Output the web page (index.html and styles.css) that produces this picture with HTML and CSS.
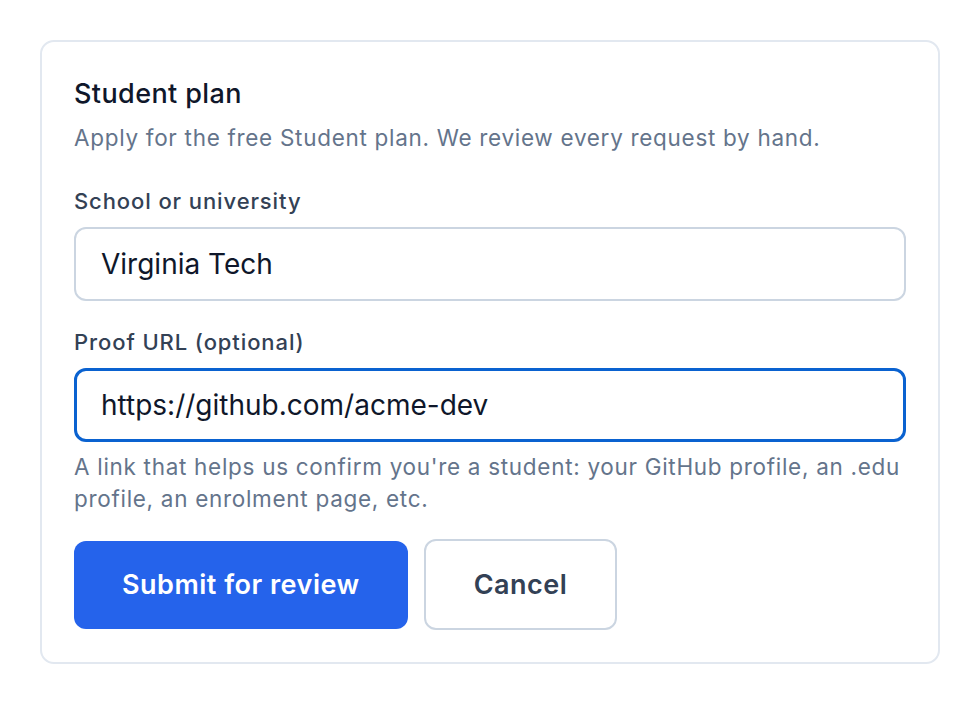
FILE: index.html
```html
<!DOCTYPE html>
<html lang="en">
<head>
<meta charset="utf-8">
<title>Student plan</title>
<link rel="stylesheet" href="styles.css">
</head>
<body>
<section class="card">
  <h2 class="title">Student plan</h2>
  <p class="subtitle">Apply for the free Student plan. We review every request by hand.</p>
  <form class="form">
    <div class="field">
      <label class="label" for="school">School or university</label>
      <input class="input" id="school" type="text" value="Virginia Tech">
    </div>
    <div class="field">
      <label class="label" for="proof">Proof URL (optional)</label>
      <input class="input input-focus" id="proof" type="text" value="https://github.com/acme-dev">
      <p class="help">A link that helps us confirm you're a student: your GitHub profile, an .edu profile, an enrolment page, etc.</p>
    </div>
    <div class="actions">
      <button type="button" class="btn btn-primary">Submit for review</button>
      <button type="button" class="btn btn-secondary">Cancel</button>
    </div>
  </form>
</section>
</body>
</html>
```
FILE: styles.css
```css
* { box-sizing: border-box; }
html, body { margin: 0; background: #ffffff; }
body {
  padding: 40px;
  font-family: Inter, "Noto Sans", sans-serif;
}
.card {
  width: 900px;
  border: 2px solid #e2e8f0;
  border-radius: 14px;
  padding: 36px 32px 32px;
  background: #fff;
}
.title {
  margin: 0;
  font-size: 27px;
  line-height: 32px;
  font-weight: 500;
  letter-spacing: 0.4px;
  color: #0f172a;
}
.subtitle {
  margin: 13px 0 0;
  font-size: 22.5px;
  line-height: 30px;
  letter-spacing: 0.7px;
  color: #64748b;
}
.form {
  display: flex;
  flex-direction: column;
}
.field {
  display: flex;
  flex-direction: column;
}
.field:first-child { margin-top: 33px; }
.field + .field { margin-top: 26px; }
.label {
  font-size: 22px;
  line-height: 30px;
  font-weight: 500;
  letter-spacing: 0.9px;
  color: #334155;
  margin-bottom: 11px;
}
.input {
  height: 74px;
  width: 100%;
  border: 2px solid #cbd5e1;
  border-radius: 12px;
  padding: 0 25px;
  font-family: inherit;
  font-size: 28px;
  color: #0f172a;
  background: #fff;
  outline: none;
}
.input-focus {
  border: 3px solid #0a62d0;
  padding: 0 24px;
}
.help {
  margin: 9px 0 0;
  font-size: 22.5px;
  line-height: 32px;
  letter-spacing: 0.7px;
  color: #64748b;
}
.actions {
  display: flex;
  align-items: center;
  gap: 16px;
  margin-top: 24px;
}
.btn {
  font-family: inherit;
  font-size: 27px;
  font-weight: 600;
  letter-spacing: 0.5px;
  padding: 0 48px;
  border-radius: 12px;
  cursor: pointer;
}
.btn-primary {
  height: 88px;
  background: #2563eb;
  color: #fff;
  border: none;
}
.btn-secondary {
  height: 91px;
  background: #fff;
  color: #334155;
  border: 2px solid #cbd5e1;
}
```
